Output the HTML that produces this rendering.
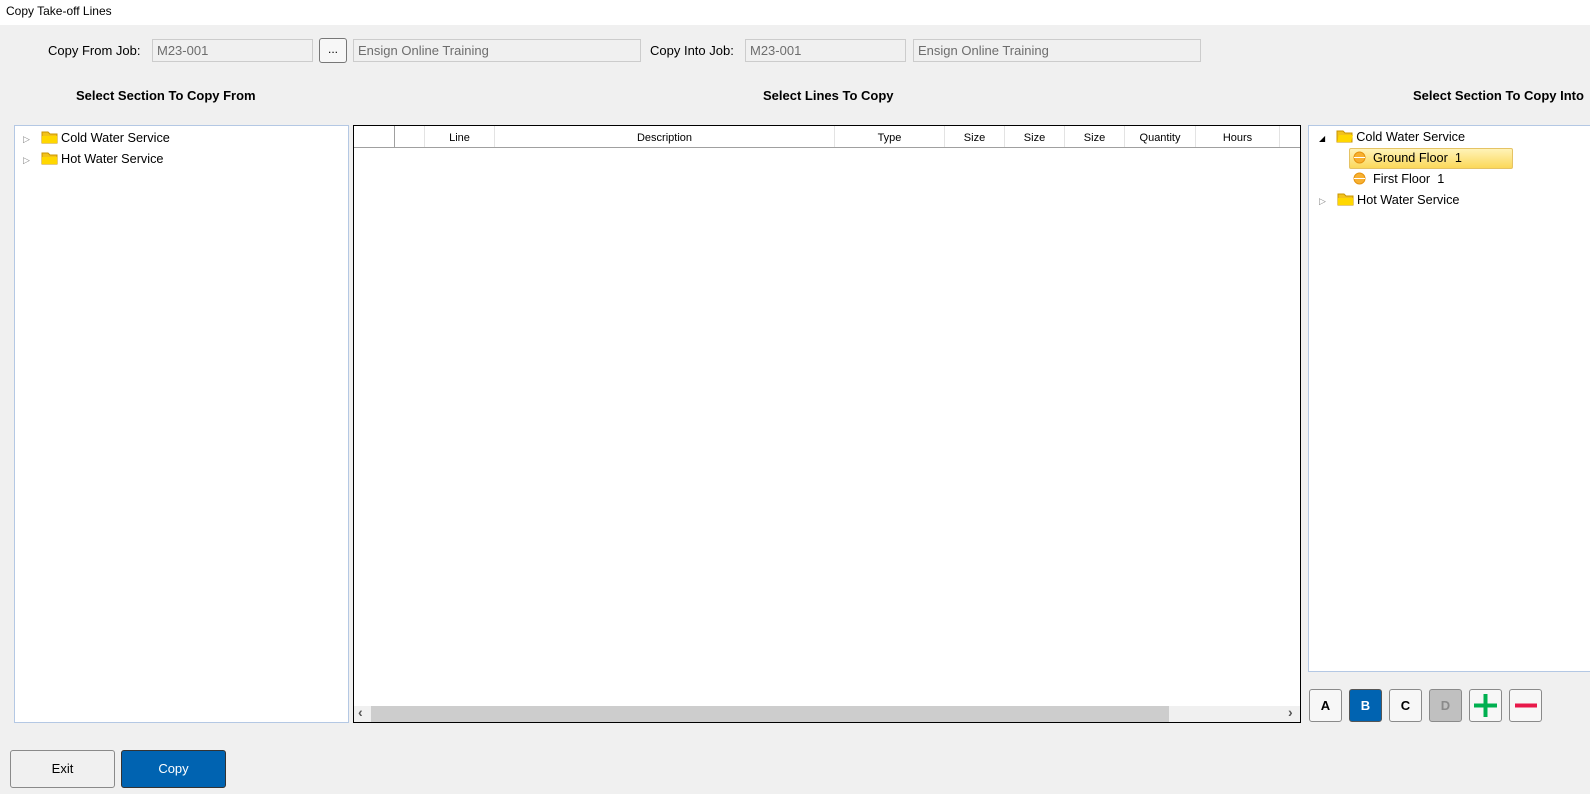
<!DOCTYPE html>
<html><head><style>
*{box-sizing:border-box;margin:0;padding:0}
body{width:1590px;height:794px;background:#f0f0f0;font-family:"Liberation Sans",sans-serif;font-size:13px;color:#000;position:relative;overflow:hidden}
.a{position:absolute}
.inp{position:absolute;height:23px;border:1px solid #ccc;background:#f0f0f0;color:#6d6d6d;padding:3px 4px;font-size:13px}
.hdr{position:absolute;top:88px;font-weight:bold;font-size:13px}
.tree{position:absolute;background:#fff;border:1px solid #b4c8e4;font-size:12.7px}
.row{position:absolute;height:20px;line-height:20px;white-space:nowrap}
.btn{position:absolute;top:689px;width:33px;height:33px;border:1px solid #8a8a8a;border-radius:3px;background:#f7f7f7;font-weight:bold;text-align:center;line-height:31px;font-size:13px}
.col{position:absolute;top:0;height:21px;border-right:1px solid #e3e3e3;text-align:center;line-height:24px;font-size:11px}
</style></head><body>
<div class="a" style="left:0;top:0;width:1590px;height:25px;background:#fff"></div>
<div class="a" style="left:6px;top:4px;font-size:12px">Copy Take-off Lines</div>

<div class="a" style="left:48px;top:43px">Copy From Job:</div>
<div class="inp" style="left:152px;top:39px;width:161px">M23-001</div>
<div class="a" style="left:319px;top:38px;width:28px;height:25px;border:1px solid #777;border-radius:3px;background:#f7f7f7;text-align:center;line-height:20px;font-size:12px">...</div>
<div class="inp" style="left:353px;top:39px;width:288px">Ensign Online Training</div>
<div class="a" style="left:650px;top:43px">Copy Into Job:</div>
<div class="inp" style="left:745px;top:39px;width:161px">M23-001</div>
<div class="inp" style="left:913px;top:39px;width:288px">Ensign Online Training</div>

<div class="hdr" style="left:76px">Select Section To Copy From</div>
<div class="hdr" style="left:763px">Select Lines To Copy</div>
<div class="hdr" style="left:1413px">Select Section To Copy Into</div>

<div class="tree" style="left:14px;top:125px;width:335px;height:598px">
 <div class="row" style="left:8px;top:2px"><span style="color:#888;font-size:9px">▷</span>&nbsp;&nbsp;&nbsp;<svg width="17" height="14" style="vertical-align:-2px"><path d="M1 2h6l2 2h7v9H1z" fill="#f2c21a" stroke="#c99400"/><rect x="1" y="6" width="15" height="7" fill="#ffd700"/></svg> Cold Water Service</div>
 <div class="row" style="left:8px;top:23px"><span style="color:#888;font-size:9px">▷</span>&nbsp;&nbsp;&nbsp;<svg width="17" height="14" style="vertical-align:-2px"><path d="M1 2h6l2 2h7v9H1z" fill="#f2c21a" stroke="#c99400"/><rect x="1" y="6" width="15" height="7" fill="#ffd700"/></svg> Hot Water Service</div>
</div>

<div class="a" style="left:353px;top:125px;width:948px;height:598px;border:1px solid #000;background:#fff">
 <div class="a" style="left:0;top:0;width:946px;height:22px;border-bottom:1px solid #a0a0a0">
  <div class="col" style="left:0;width:41px;border-right-color:#a0a0a0"></div>
  <div class="col" style="left:41px;width:30px"></div>
  <div class="col" style="left:71px;width:70px">Line</div>
  <div class="col" style="left:141px;width:340px">Description</div>
  <div class="col" style="left:481px;width:110px">Type</div>
  <div class="col" style="left:591px;width:60px">Size</div>
  <div class="col" style="left:651px;width:60px">Size</div>
  <div class="col" style="left:711px;width:60px">Size</div>
  <div class="col" style="left:771px;width:71px">Quantity</div>
  <div class="col" style="left:842px;width:84px">Hours</div>
 </div>
 <div class="a" style="left:0;top:580px;width:946px;height:16px;background:#f0f0f0"></div>
 <div class="a" style="left:17px;top:580px;width:798px;height:16px;background:#cdcdcd"></div>
 <div class="a" style="left:4px;top:578px;font-size:14px;font-weight:bold;color:#555">‹</div>
 <div class="a" style="left:934px;top:578px;font-size:14px;font-weight:bold;color:#555">›</div>
</div>

<div class="tree" style="left:1308px;top:125px;width:290px;height:547px">
 <div class="row" style="left:10px;top:1px"><span style="font-size:8px">◢</span>&nbsp;&nbsp;&nbsp;<svg width="17" height="14" style="vertical-align:-2px"><path d="M1 2h6l2 2h7v9H1z" fill="#f2c21a" stroke="#c99400"/><path d="M3 6h14l-2 7H1z" fill="#ffd700"/></svg> Cold Water Service</div>
 <div class="a" style="left:40px;top:22px;width:164px;height:21px;background:linear-gradient(#fff3b8,#fbd85a);border:1px solid #e5c365;border-radius:2px"></div>
 <div class="row" style="left:44px;top:22px"><svg width="13" height="13" style="vertical-align:-2px"><circle cx="6.5" cy="6.5" r="5.5" fill="#f7b030" stroke="#e59410"/><path d="M1 6.5h11" stroke="#fff"/></svg>&nbsp; Ground Floor&nbsp; 1</div>
 <div class="row" style="left:44px;top:43px"><svg width="13" height="13" style="vertical-align:-2px"><circle cx="6.5" cy="6.5" r="5.5" fill="#f7b030" stroke="#e59410"/><path d="M1 6.5h11" stroke="#fff"/></svg>&nbsp; First Floor&nbsp; 1</div>
 <div class="row" style="left:10px;top:64px"><span style="color:#888;font-size:9px">▷</span>&nbsp;&nbsp;&nbsp;<svg width="17" height="14" style="vertical-align:-2px"><path d="M1 2h6l2 2h7v9H1z" fill="#f2c21a" stroke="#c99400"/><rect x="1" y="6" width="15" height="7" fill="#ffd700"/></svg> Hot Water Service</div>
</div>

<div class="btn" style="left:1309px">A</div>
<div class="btn" style="left:1349px;background:#0063b1;color:#fff;border-color:#555">B</div>
<div class="btn" style="left:1389px">C</div>
<div class="btn" style="left:1429px;background:#c0c0c0;color:#8a8a8a">D</div>
<div class="btn" style="left:1469px"><svg width="31" height="31" style="position:absolute;left:0;top:0"><path d="M15.5 4v23M4 15.5h23" stroke="#00b050" stroke-width="4"/></svg></div>
<div class="btn" style="left:1509px"><svg width="31" height="31" style="position:absolute;left:0;top:0"><path d="M5 15.5h22" stroke="#e8194a" stroke-width="4"/></svg></div>

<div class="a" style="left:10px;top:750px;width:105px;height:38px;border:1px solid #8a8a8a;border-radius:3px;background:#f0f0f0;text-align:center;line-height:36px">Exit</div>
<div class="a" style="left:121px;top:750px;width:105px;height:38px;border:1px solid #333;border-radius:3px;background:#0063b1;color:#fff;text-align:center;line-height:36px">Copy</div>
</body></html>
